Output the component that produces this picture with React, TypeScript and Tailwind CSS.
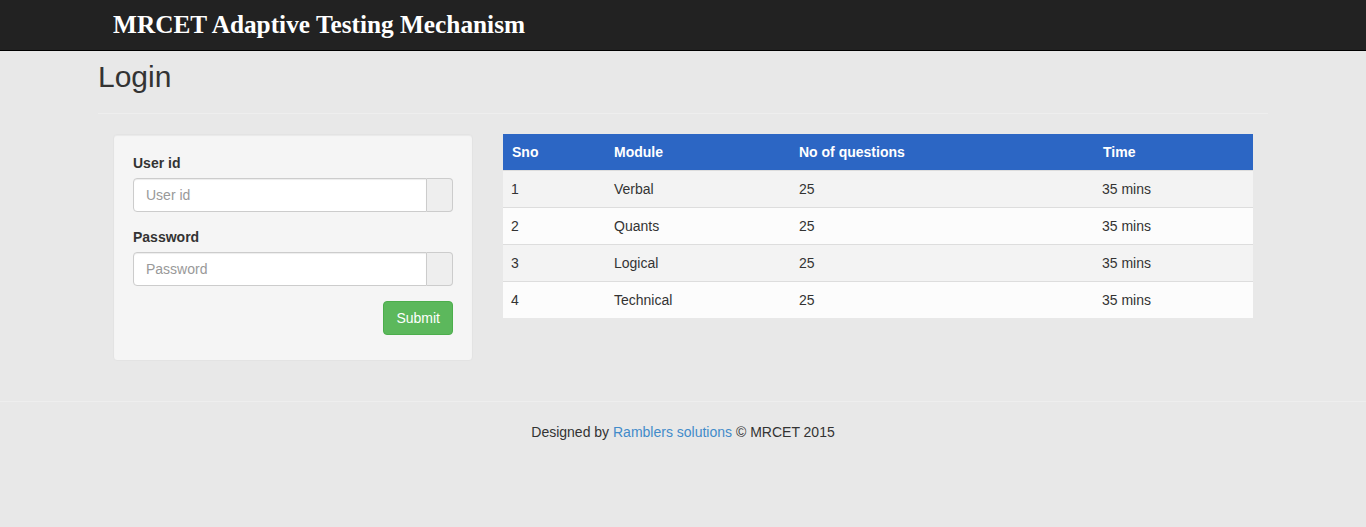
const modules = [
  { sno: 1, name: "Verbal", questions: 25, time: "35 mins" },
  { sno: 2, name: "Quants", questions: 25, time: "35 mins" },
  { sno: 3, name: "Logical", questions: 25, time: "35 mins" },
  { sno: 4, name: "Technical", questions: 25, time: "35 mins" },
];

function Field({ label, placeholder, type }: { label: string; placeholder: string; type: string }) {
  return (
    <div className="mb-[15px]">
      <label className="block mb-[5px] text-[14px] leading-[20px] font-bold text-[#333]">{label}</label>
      <div className="flex h-[34px]">
        <input
          type={type}
          placeholder={placeholder}
          className="flex-1 min-w-0 px-3 bg-white border border-[#ccc] rounded-l-[4px] text-[14px] text-[#555] placeholder:text-[#999] shadow-[inset_0_1px_1px_rgba(0,0,0,0.075)] focus:outline-none"
        />
        <span className="w-[26px] bg-[#eee] border border-l-0 border-[#ccc] rounded-r-[4px]" />
      </div>
    </div>
  );
}

export default function App() {
  return (
    <div className="min-h-screen bg-[#e8e8e8] font-['Liberation_Sans',Arial,sans-serif] text-[14px] text-[#333]">
      <nav className="h-[51px] bg-[#222] border-b border-black">
        <div className="w-[1170px] mx-auto px-[15px] h-[50px] flex items-center">
          <span className="font-['Liberation_Serif','Times_New_Roman',serif] font-bold text-[25.3px] text-white leading-none">
            MRCET Adaptive Testing Mechanism
          </span>
        </div>
      </nav>

      <div className="w-[1170px] mx-auto">
        <div className="mt-[9px] pb-[20px] border-b border-[#eee]">
          <h1 className="text-[30px] leading-[33px] font-normal text-[#333]">Login</h1>
        </div>

        <div className="flex gap-[30px] mt-[20px] px-[15px]">
          <div className="w-[360px] shrink-0 bg-[#f5f5f5] border border-[#e3e3e3] rounded-[4px] pt-[18px] px-[19px] pb-[25px] shadow-[inset_0_1px_1px_rgba(0,0,0,0.05)]">
            <Field label="User id" placeholder="User id" type="text" />
            <Field label="Password" placeholder="Password" type="password" />
            <div className="flex justify-end">
              <button className="h-[34px] px-[12px] bg-[#5cb85c] border border-[#4cae4c] rounded-[4px] text-white text-[14px]">
                Submit
              </button>
            </div>
          </div>

          <div className="flex-1 self-start">
            <table className="w-full border-collapse text-[14px]">
              <thead>
                <tr className="bg-[#2c66c4] text-white h-[36px]">
                  <th className="w-[103px] text-left font-bold px-[9px] pt-[2px]">Sno</th>
                  <th className="w-[185px] text-left font-bold px-[8px] pt-[2px]">Module</th>
                  <th className="w-[304px] text-left font-bold px-[8px] pt-[2px]">No of questions</th>
                  <th className="text-left font-bold px-[8px] pt-[2px]">Time</th>
                </tr>
              </thead>
              <tbody>
                {modules.map((m, i) => (
                  <tr key={m.sno} className={`h-[37px] border-t border-[#ddd] ${i % 2 === 0 ? "bg-[#f3f3f3]" : "bg-[#fcfcfc]"}`}>
                    <td className="px-[8px] pt-[2px]">{m.sno}</td>
                    <td className="px-[8px] pt-[2px]">{m.name}</td>
                    <td className="px-[8px] pt-[2px]">{m.questions}</td>
                    <td className="px-[7px] pt-[2px]">{m.time}</td>
                  </tr>
                ))}
              </tbody>
            </table>
          </div>
        </div>
      </div>

      <footer className="mt-[40px] border-t border-[#eee] pt-[20px] text-center text-[14px] leading-[20px] text-[#333]">
        Designed by <a className="text-[#428bca]">Ramblers solutions</a> © MRCET 2015
      </footer>
    </div>
  );
}
